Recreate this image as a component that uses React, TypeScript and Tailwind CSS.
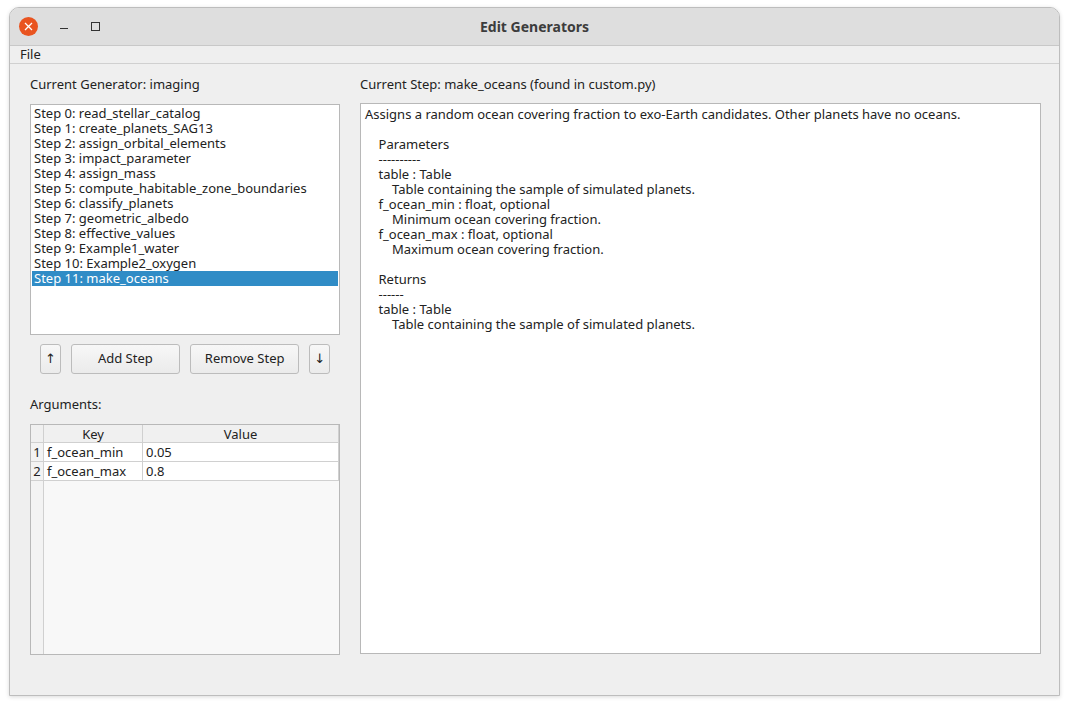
import React from "react";

const steps = ["read_stellar_catalog","create_planets_SAG13","assign_orbital_elements","impact_parameter","assign_mass","compute_habitable_zone_boundaries","classify_planets","geometric_albedo","effective_values","Example1_water","Example2_oxygen","make_oceans"];

const doc = `Assigns a random ocean covering fraction to exo-Earth candidates. Other planets have no oceans.

    Parameters
    ----------
    table : Table
        Table containing the sample of simulated planets.
    f_ocean_min : float, optional
        Minimum ocean covering fraction.
    f_ocean_max : float, optional
        Maximum ocean covering fraction.

    Returns
    ------
    table : Table
        Table containing the sample of simulated planets.`;

const btn = "h-[30px] border border-[#bcbcbc] rounded-[3px] bg-gradient-to-b from-[#f7f7f7] to-[#ebebeb] text-[#222]";

export default function App() {
  return (
    <div className="w-[1069px] h-[705px] bg-white relative text-[13px] text-[#333]" style={{ fontFamily: '"Noto Sans", "Open Sans", sans-serif' }}>
      <div className="absolute left-[9px] top-[7px] w-[1051px] h-[689px] border border-[#bdbdbd] rounded-t-[10px] bg-[#efefef] flex flex-col overflow-hidden shadow-[0_1px_4px_rgba(0,0,0,0.15)]">
        <div className="h-[38px] bg-[#dedede] border-b border-[#c8c8c8] flex items-center relative shrink-0">
          <div className="ml-[9px] w-[19px] h-[19px] rounded-full bg-[#e95420] flex items-center justify-center">
            <svg width="9" height="9" viewBox="0 0 9 9"><path d="M1 1L8 8M8 1L1 8" stroke="white" strokeWidth="1.3" /></svg>
          </div>
          <div className="ml-[22px] w-[8px] h-[1px] bg-[#333] mt-[4px]" />
          <div className="ml-[23px] w-[9px] h-[9px] border border-[#333]" />
          <div className="absolute inset-0 flex items-center justify-center font-bold text-[14px] text-[#3c3c3c] pointer-events-none">Edit Generators</div>
        </div>
        <div className="h-[18px] border-b border-[#d0d0d0] flex items-center px-[10px] text-[13px] text-[#222] shrink-0">File</div>
        <div className="flex px-[20px] pt-[12px] gap-[20px] text-[#222]">
          <div className="w-[310px] flex flex-col">
            <div className="h-[16px] leading-[16px]">Current Generator: imaging</div>
            <div className="mt-[12px] h-[231px] bg-white border border-[#b8b8b8] pt-[1px] px-[1px]">
              {steps.map((s, i) => (
                <div key={i} className={`h-[15px] leading-[15px] px-[2px] ${i === 11 ? "bg-[#308cc6] text-white" : ""}`}>Step {i}: {s}</div>
              ))}
            </div>
            <div className="flex items-center mt-[9px] h-[30px] px-[10px] gap-[10px]">
              <button className={`w-[21px] ${btn}`} style={{ fontFamily: '"DejaVu Sans", sans-serif' }}>↑</button>
              <button className={`w-[111px] ${btn}`}>Add Step</button>
              <button className={`w-[111px] ${btn}`}>Remove Step</button>
              <button className={`w-[21px] ${btn}`} style={{ fontFamily: '"DejaVu Sans", sans-serif' }}>↓</button>
            </div>
            <div className="mt-[22px] h-[16px] leading-[16px]">Arguments:</div>
            <div className="mt-[12px] h-[231px] border border-[#b8b8b8] bg-[#f3f3f3] flex flex-col">
              <div className="flex h-[18px] bg-[#f0f0f0] border-b border-[#d0d0d0]">
                <div className="w-[13px] border-r border-[#d0d0d0]" />
                <div className="w-[99px] border-r border-[#d0d0d0] text-center leading-[18px]">Key</div>
                <div className="w-[196px] border-r border-[#d0d0d0] text-center leading-[18px]">Value</div>
              </div>
              {[["f_ocean_min","0.05"],["f_ocean_max","0.8"]].map(([k,v],i)=>(
                <div key={i} className="flex h-[19px] border-b border-[#d0d0d0]">
                  <div className="w-[13px] border-r border-[#d0d0d0] text-center leading-[19px]">{i+1}</div>
                  <div className="w-[99px] border-r border-[#d0d0d0] bg-white px-[3px] leading-[19px]">{k}</div>
                  <div className="w-[196px] border-r border-[#d0d0d0] bg-white px-[3px] leading-[19px]">{v}</div>
                </div>
              ))}
              <div className="flex flex-1"><div className="w-[13px] border-r border-[#d0d0d0]" /><div className="flex-1 bg-[#f8f8f8]" /></div>
            </div>
          </div>
          <div className="flex-1 flex flex-col">
            <div className="h-[16px] leading-[16px]">Current Step: make_oceans (found in custom.py)</div>
            <div className="mt-[11px] h-[551px] w-[681px] bg-white border border-[#b8b8b8] px-[4px] pt-[3px] whitespace-pre leading-[15px]">{doc}</div>
          </div>
        </div>
      </div>
    </div>
  );
}
